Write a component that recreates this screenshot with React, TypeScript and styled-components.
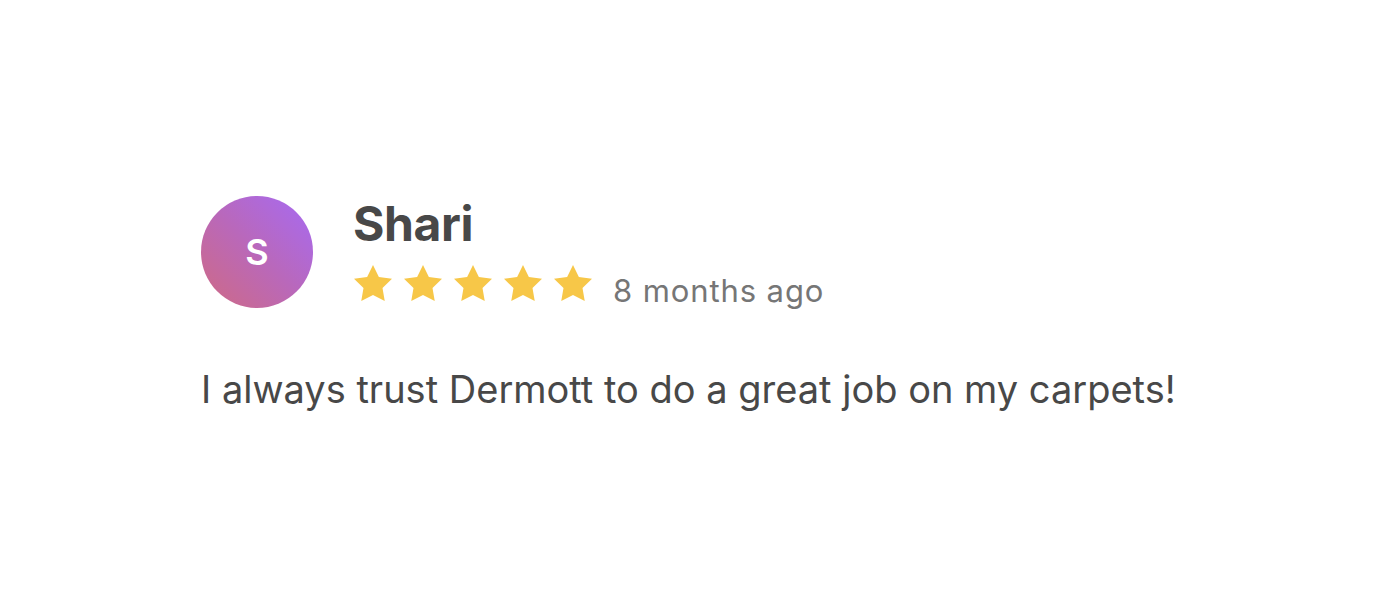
import { ReactElement } from 'react';
import styled, { createGlobalStyle } from 'styled-components';

const GlobalStyle = createGlobalStyle`
  html, body {
    margin: 0;
    padding: 0;
    background: #ffffff;
  }
  body {
    font-family: Inter, "Noto Sans", "Liberation Sans", sans-serif;
    color: #484848;
  }
`;

const ScPage = styled.main`
  padding: 196px 0 0 201px;
`;

const ScHeader = styled.div`
  display: flex;
  align-items: flex-start;
  gap: 40px;
`;

const ScAvatar = styled.div`
  width: 112px;
  height: 112px;
  border-radius: 50%;
  flex: none;
  display: flex;
  align-items: center;
  justify-content: center;
  background: linear-gradient(45deg, #cf6a83 0%, #b968bb 50%, #a66af4 100%);
  color: #ffffff;
  font-size: 36px;
  font-weight: 600;
`;

const ScMeta = styled.div`
  display: flex;
  flex-direction: column;
  padding-top: 3px;
`;

const ScName = styled.div`
  font-size: 48px;
  font-weight: 700;
  line-height: 50px;
  letter-spacing: -0.4px;
  color: #484848;
`;

const ScRatingRow = styled.div`
  display: flex;
  align-items: flex-start;
  gap: 20px;
  margin-top: 15px;
`;

const ScStars = styled.div`
  display: flex;
  gap: 10px;
`;

const ScTime = styled.span`
  font-size: 31px;
  letter-spacing: 0.9px;
  color: #767676;
  padding-top: 8px;
`;

const ScReview = styled.p`
  margin: 57px 0 0;
  font-size: 38px;
  line-height: 46px;
  color: #484848;
`;

function Star(): ReactElement {
  return <svg width="40" height="38" viewBox="0 0 24 23">
    <path
      d="M12 0.6l3.55 7.2 7.95 1.15-5.75 5.6 1.36 7.9L12 18.7l-7.11 3.75 1.36-7.9L0.5 8.95l7.95-1.15z"
      fill="#f7c748"
    />
  </svg>;
}

export default function App(): ReactElement {
  return <>
    <GlobalStyle />
    <ScPage>
      <ScHeader>
        <ScAvatar>S</ScAvatar>
        <ScMeta>
          <ScName>Shari</ScName>
          <ScRatingRow>
            <ScStars>
              {[0, 1, 2, 3, 4].map(i => <Star key={i} />)}
            </ScStars>
            <ScTime>8 months ago</ScTime>
          </ScRatingRow>
        </ScMeta>
      </ScHeader>
      <ScReview>I always trust Dermott to do a great job on my carpets!</ScReview>
    </ScPage>
  </>;
}
